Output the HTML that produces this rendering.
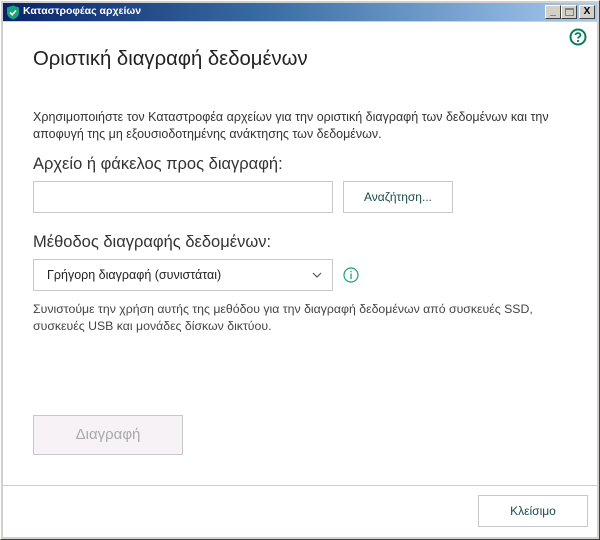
<!DOCTYPE html>
<html><head><meta charset="utf-8"><style>
*{margin:0;padding:0;box-sizing:border-box}
body{width:600px;height:540px;background:#d4d0c8;position:relative;overflow:hidden;font-family:"Liberation Sans","DejaVu Sans",sans-serif;color:#222}
.frame{position:absolute;left:0;top:0;width:600px;height:540px;border:1px solid #fff;border-right-color:#404040;border-bottom-color:#404040}
.title{position:absolute;left:3px;top:3px;width:594px;height:18px;background:linear-gradient(90deg,#0a246a 0%,#3a6ea5 45%,#a6caf0 100%)}
.title span{position:absolute;left:20px;top:2px;color:#fff;font-weight:bold;font-size:10.5px}
.tb{position:absolute;top:2px;width:16px;height:14px;background:#d4d0c8;border:1px solid #fff;border-right-color:#404040;border-bottom-color:#404040;font-size:10px;font-weight:bold;text-align:center;line-height:12px;color:#000}
.client{position:absolute;left:3px;top:22px;width:594px;height:515px;background:#fff}
.a{position:absolute;white-space:nowrap}
.box{position:absolute;border:1px solid #c8c8c8;background:#fff}
.btn{position:absolute;border:1px solid #c8c8c8;background:#fff;text-align:center;font-size:12px;color:#1a4a4a}
</style></head><body>
<div class="frame"></div>
<div class="title">
<svg style="position:absolute;left:3px;top:2px" width="14" height="15" viewBox="0 0 14 15"><path d="M7 0.5 L13 2.5 V8 C13 11 10 13.5 7 14.5 C4 13.5 1 11 1 8 V2.5 Z" fill="#1aa37a"/><path d="M4 7.5 L6.2 9.7 L10 5.5" stroke="#fff" stroke-width="1.6" fill="none"/></svg>
<span>Καταστροφέας αρχείων</span>
<div class="tb" style="left:542px">_</div>
<div class="tb" style="left:558px"><div style="margin:2px auto;width:9px;height:8px;border:1px solid #808080;border-top-width:2px"></div></div>
<div class="tb" style="left:576px">X</div>
</div>
<div class="client">
<svg style="position:absolute;left:566px;top:6px" width="18" height="18" viewBox="0 0 18 18"><circle cx="9" cy="9" r="7.5" fill="none" stroke="#0d7a5f" stroke-width="2"/><path d="M6.5 7 C6.5 4.5 11.5 4.5 11.5 7 C11.5 8.8 9 8.8 9 10.5" fill="none" stroke="#0d7a5f" stroke-width="1.8"/><circle cx="9" cy="13" r="1.1" fill="#0d7a5f"/></svg>
<div class="a" style="left:30px;top:26px;font-size:20.3px;color:#222">Οριστική διαγραφή δεδομένων</div>
<div class="a" style="left:30px;top:87px;font-size:12.5px;line-height:17px;color:#333">Χρησιμοποιήστε τον Καταστροφέα αρχείων για την οριστική διαγραφή των δεδομένων και την<br>αποφυγή της μη εξουσιοδοτημένης ανάκτησης των δεδομένων.</div>
<div class="a" style="left:30px;top:133px;font-size:16.5px;color:#333">Αρχείο ή φάκελος προς διαγραφή:</div>
<div class="box" style="left:30px;top:159px;width:300px;height:32px"></div>
<div class="btn" style="left:340px;top:159px;width:110px;height:32px;line-height:30px">Αναζήτηση...</div>
<div class="a" style="left:30px;top:211px;font-size:16.5px;color:#333">Μέθοδος διαγραφής δεδομένων:</div>
<div class="box" style="left:30px;top:237px;width:300px;height:32px"><span class="a" style="left:13px;top:8px;font-size:12.5px;color:#222">Γρήγορη διαγραφή (συνιστάται)</span>
<svg style="position:absolute;left:278px;top:12px" width="10" height="6"><path d="M1 1 L5 5 L9 1" fill="none" stroke="#555" stroke-width="1.2"/></svg></div>
<svg style="position:absolute;left:340px;top:245px" width="16" height="16" viewBox="0 0 16 16"><circle cx="8" cy="8" r="7" fill="none" stroke="#1aa37a" stroke-width="1.2"/><rect x="7.4" y="6.5" width="1.3" height="5.5" fill="#1aa37a"/><rect x="7.4" y="3.8" width="1.3" height="1.4" fill="#1aa37a"/></svg>
<div class="a" style="left:30px;top:279px;font-size:12.3px;line-height:17px;color:#444">Συνιστούμε την χρήση αυτής της μεθόδου για την διαγραφή δεδομένων από συσκευές SSD,<br>συσκευές USB και μονάδες δίσκων δικτύου.</div>
<div class="btn" style="left:30px;top:393px;width:150px;height:40px;line-height:38px;background:#f6f2f6;color:#aaa;font-size:15px">Διαγραφή</div>
<div style="position:absolute;left:0;top:463px;width:594px;height:1px;background:#c8d0d8"></div>
<div class="btn" style="left:475px;top:473px;width:110px;height:32px;line-height:30px">Κλείσιμο</div>
</div>
</body></html>
